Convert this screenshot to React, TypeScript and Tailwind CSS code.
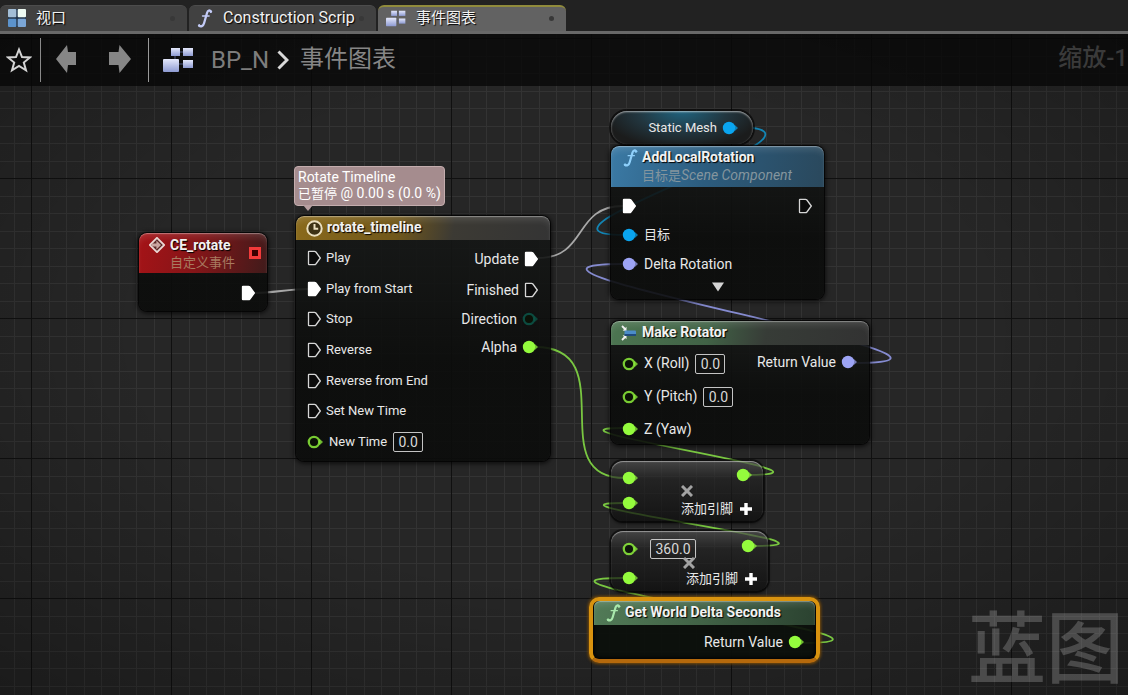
import type { ReactNode } from "react";

const GREEN = "#94fb3d";
const BLUE = "#0aa5f0";
const LILAC = "#9da4f5";
const TEAL = "#0c5a4c";

function ExecPin({ filled = false }: { filled?: boolean }) {
  return (
    <svg className="h-4 w-[14px] shrink-0" viewBox="0 0 14 16" aria-hidden="true">
      <path
        d="M2 1.3 H7.5 Q8.3 1.3 8.9 2 L13.3 8 L8.9 14 Q8.3 14.7 7.5 14.7 H2 Q1.5 14.7 1.5 14 V2 Q1.5 1.3 2 1.3 Z"
        fill={filled ? "#ffffff" : "#0b0b0b"}
        stroke={filled ? "#ffffff" : "#d6d6d6"}
        strokeWidth="1.3"
      />
    </svg>
  );
}

function DataPin({ color, filled = false }: { color: string; filled?: boolean }) {
  return (
    <svg className="h-[14px] w-4 shrink-0" viewBox="0 0 16 14" aria-hidden="true">
      <path d="M12.3 3.6 L16 7 L12.3 10.4 Z" fill={color} opacity="0.7" />
      {filled ? (
        <circle cx="7" cy="7" r="6.2" fill={color} />
      ) : (
        <circle cx="7" cy="7" r="5.2" fill="#0a1206" stroke={color} strokeWidth="2.3" opacity="0.8" />
      )}
    </svg>
  );
}

function FunctionGlyph({ color, className }: { color: string; className: string }) {
  return (
    <svg className={className} viewBox="0 0 16 20" fill="none" stroke={color} strokeLinecap="round" aria-hidden="true">
      <path d="M14.3 2.6 C13 .8 11 1.2 10.2 4 L7 15 C6.2 18.2 3.4 19 1.8 17.6" strokeWidth="2.4" />
      <path d="M5.4 7.4 H12.3" strokeWidth="1.5" />
      <circle cx="14" cy="2.8" r=".9" fill={color} strokeWidth="1" />
      <circle cx="2" cy="17.3" r=".9" fill={color} strokeWidth="1" />
    </svg>
  );
}

function GraphGlyph({ className }: { className: string }) {
  return (
    <svg className={className} viewBox="0 0 31 26" aria-hidden="true">
      <defs>
        <linearGradient id="block" x1="0" y1="0" x2="0" y2="1">
          <stop offset="0" stopColor="#e4e8fb" />
          <stop offset="1" stopColor="#8d9ad2" />
        </linearGradient>
      </defs>
      <path d="M15 5 H22 M15 17 H22 M12 9 V15" stroke="#4c5680" strokeWidth="1" />
      <rect x="8" y="1" width="9" height="8" fill="url(#block)" />
      <rect x="20" y="1" width="10" height="8" fill="url(#block)" />
      <rect x="0" y="12" width="16" height="13" rx="1" fill="url(#block)" />
      <rect x="20" y="13" width="10" height="8" fill="url(#block)" />
    </svg>
  );
}

function ViewportGlyph() {
  return (
    <svg className="h-[18px] w-[18px] shrink-0" viewBox="0 0 18 18" aria-hidden="true">
      <rect x="0" y="0" width="18" height="18" rx="1" fill="#23364c" />
      <rect x="0" y="0" width="8.3" height="8.3" rx="1" fill="#a3bed6" />
      <rect x="9.7" y="0" width="8.3" height="8.3" rx="1" fill="#eefaf2" />
      <rect x="0" y="9.7" width="8.3" height="8.3" rx="1" fill="#5c93cc" />
      <rect x="9.7" y="9.7" width="8.3" height="8.3" rx="1" fill="#7ba6d6" />
    </svg>
  );
}

function Tab({ icon, label, active = false, cjk = false }: { icon: ReactNode; label: string; active?: boolean; cjk?: boolean }) {
  return (
    <div
      className={
        active
          ? "flex h-[26px] w-[188px] min-w-0 items-center rounded-t-md border-t-2 border-[#908b3c] bg-[#626262] pr-3 pb-[2px] pl-2"
          : "flex h-[26px] w-[187px] min-w-0 items-center rounded-t-md border-t border-[#4c4c4c] bg-[#414141] pr-3 pb-px pl-2"
      }
    >
      <button
        type="button"
        role="tab"
        aria-selected={active}
        className="flex min-w-0 flex-1 items-center gap-[10px] text-left whitespace-nowrap text-[#f2f2f2] [text-shadow:1px_1px_1px_#000]"
      >
        {icon}
        <span className={cjk ? "text-[15px]" : "text-[16px]"}>{label}</span>
      </button>
      <button type="button" aria-label={`关闭 ${label}`} className="h-[5px] w-[5px] shrink-0 rounded-full bg-[#383838]" />
    </div>
  );
}

function ValueBox({ label, value, wide = false }: { label: string; value: string; wide?: boolean }) {
  return (
    <input
      aria-label={label}
      defaultValue={value}
      className={
        wide
          ? "h-5 w-[46px] rounded-[2px] border border-[#c4c4c4] bg-transparent text-center text-[14px] leading-4 text-[#d8d8d8]"
          : "h-5 w-[30px] rounded-[2px] border border-[#c4c4c4] bg-transparent text-center text-[14px] leading-4 text-[#d8d8d8]"
      }
    />
  );
}

const nodeFrame =
  "absolute overflow-hidden rounded-lg bg-[linear-gradient(180deg,rgba(22,24,23,0.9)_0%,rgba(11,12,11,0.9)_60%)] shadow-[0_0_0_1px_rgba(0,0,0,0.7),0_1px_4px_2px_rgba(0,0,0,0.6)]";
const gloss = "shadow-[inset_0_1px_1px_rgba(255,255,255,0.35),inset_0_6px_6px_-2px_rgba(255,255,255,0.12)]";
const titleText = "text-[14px] leading-4 font-bold text-[#f2f2f2] [text-shadow:1px_1px_1px_#000]";

function Wires() {
  return (
    <svg className="absolute inset-0 h-full w-full" fill="none" aria-hidden="true">
      <g transform="translate(0 -34)" strokeWidth="1.8">
        <path d="M254 293 C272 293 290 289 308 289" stroke="#a8a8a8" />
        <path d="M538 258 C588 258 573 206 623 206" stroke="#a8a8a8" />
        <path d="M735 127 C871 127 499 235 623 235" stroke="#1385b4" />
        <path d="M855 363 C1040 363 436 264 623 264" stroke="#858bd0" />
        <path d="M535 347 C625 347 540 478 625 478" stroke="#79c741" />
        <path d="M746 475 C871 475 519 428 623 428" stroke="#79c741" />
        <path d="M752 546 C877 546 519 503 623 503" stroke="#79c741" />
        <path d="M800 643 C960 643 475 578 623 578" stroke="#79c741" />
      </g>
    </svg>
  );
}

function Grid() {
  return (
    <svg className="absolute inset-0 h-full w-full" aria-hidden="true">
      <defs>
        <pattern id="grid" x="31" y="144" width="140" height="140" patternUnits="userSpaceOnUse">
          <path
            d="M18 0V140M35 0V140M53 0V140M70 0V140M88 0V140M105 0V140M123 0V140M0 18H140M0 35H140M0 53H140M0 70H140M0 88H140M0 105H140M0 123H140"
            transform="translate(.5 .5)"
            stroke="#333333"
          />
          <path d="M.5 0V140M0 .5H140" stroke="#101010" />
        </pattern>
        <radialGradient id="shade" cx=".5" cy=".45" r=".75">
          <stop offset=".5" stopColor="#000" stopOpacity="0" />
          <stop offset="1" stopColor="#000" stopOpacity=".3" />
        </radialGradient>
      </defs>
      <rect width="100%" height="100%" fill="#262626" />
      <rect width="100%" height="100%" fill="url(#grid)" />
      <rect width="100%" height="100%" fill="url(#shade)" />
    </svg>
  );
}

function EventNode() {
  return (
    <section className={`${nodeFrame} top-[199px] left-[139px] w-32`}>
      <header className={`flex h-10 items-start rounded-t-lg bg-[linear-gradient(100deg,#a51317_0%,#851518_45%,#401b1b_100%)] pt-1 pr-[6px] pl-[10px] ${gloss}`}>
        <svg className="h-4 w-4 shrink-0" viewBox="0 0 16 16" aria-hidden="true">
          <path d="M8 .8 L15.2 8 L8 15.2 L.8 8 Z" fill="#5a2a28" stroke="#ead6d2" strokeWidth="1.8" />
          <path d="M3 6.6 H7.4 V3.6 L12 8 L7.4 12.4 V9.4 H3 Z" fill="#c9a5a0" />
        </svg>
        <div className="ml-[5px] flex-1">
          <h2 className={titleText}>CE_rotate</h2>
          <p className="text-[13px] leading-5 text-[#a87a60]">自定义事件</p>
        </div>
        <span className="mt-[10px] h-3 w-3 border-[3px] border-[#f23a3a] bg-[#3a0000]" />
      </header>
      <div className="flex h-[38px] justify-end pt-3 pr-3">
        <ExecPin filled />
      </div>
    </section>
  );
}

function TimelineNode() {
  const inputs = ["Play", "Play from Start", "Stop", "Reverse", "Reverse from End", "Set New Time"];
  return (
    <section className={`${nodeFrame} top-[182px] left-[296px] w-[254px]`}>
      <header className={`flex h-6 items-center gap-1 rounded-t-lg bg-[linear-gradient(100deg,#8a6a1c_0%,#70571b_40%,#3c3a34_62%,#343434_100%)] pl-[10px] ${gloss}`}>
        <svg className="h-[17px] w-[17px]" viewBox="0 0 17 17" fill="none" stroke="#eadfc0" strokeWidth="2" aria-hidden="true">
          <circle cx="8.5" cy="8.5" r="7.2" fill="#3d3215" />
          <path d="M8.5 4 V8.8 H12.2" />
        </svg>
        <h2 className={`${titleText} pb-[2px]`}>rotate_timeline</h2>
      </header>
      <div className="flex justify-between pt-[3px] pr-3 pb-1 pl-[11px]">
        <ul className="grid h-[214px] grid-rows-7 text-[13px]">
          {inputs.map((name) => (
            <li key={name} className="flex items-center gap-[5px]">
              <ExecPin filled={name === "Play from Start"} />
              {name}
            </li>
          ))}
          <li className="flex items-center gap-[6px]">
            <DataPin color={GREEN} />
            <span>New Time</span>
            <ValueBox label="New Time" value="0.0" />
          </li>
        </ul>
        <ul className="flex flex-col items-end">
          <li className="flex h-[31px] items-center gap-[5px]">
            Update <ExecPin filled />
          </li>
          <li className="flex h-[31px] items-center gap-[5px]">
            Finished <ExecPin />
          </li>
          <li className="flex h-7 items-center gap-[5px]">
            Direction <DataPin color={TEAL} />
          </li>
          <li className="flex h-7 items-center gap-[5px]">
            Alpha <DataPin color={GREEN} filled />
          </li>
        </ul>
      </div>
    </section>
  );
}

function CommentBubble() {
  return (
    <aside className="absolute top-[132px] left-[294px] rounded-[4px] border border-[#c4adae] bg-[#a58c8e] px-[3px] pt-[2px] pb-[3px] text-[14px] leading-4 whitespace-nowrap text-white">
      <p>Rotate Timeline</p>
      <p>
        <span className="text-[13px]">已暂停</span> @ 0.00 s (0.0 %)
      </p>
      <svg className="absolute top-full left-2 h-[6px] w-[10px]" viewBox="0 0 10 6" aria-hidden="true">
        <path d="M0 0 H10 L5 6 Z" fill="#b89fa1" />
      </svg>
    </aside>
  );
}

function StaticMeshNode() {
  return (
    <section className="absolute top-[77px] left-[611px] flex h-[33px] w-[142px] items-center justify-end gap-[5px] rounded-2xl bg-[radial-gradient(ellipse_at_50%_0%,#1f637f_0%,#22363f_45%,#1b1c1c_80%)] pr-[15px] text-[13px] shadow-[inset_0_1px_2px_rgba(255,255,255,0.6),0_0_0_2px_rgba(0,0,0,0.6)]">
      Static Mesh <DataPin color={BLUE} filled />
    </section>
  );
}

function AddLocalRotationNode() {
  return (
    <section className={`${nodeFrame} top-[112px] left-[611px] w-[213px]`}>
      <header className={`flex h-[41px] items-start rounded-t-lg bg-[linear-gradient(100deg,#3b7aa5_0%,#2c5c7e_45%,#2a485c_100%)] pt-[3px] pl-3 ${gloss}`}>
        <FunctionGlyph color="#8fd0fb" className="h-[18px] w-[15px]" />
        <div className="ml-1">
          <h2 className={titleText}>AddLocalRotation</h2>
          <p className="text-[14px] leading-5 whitespace-nowrap text-[#84959e]">
            <span className="text-[13px]">目标是</span>
            <em>Scene Component</em>
          </p>
        </div>
      </header>
      <div className="flex justify-between pt-1 pr-3 pl-[11px]">
        <ul>
          <li className="flex h-[29px] items-center">
            <ExecPin filled />
          </li>
          <li className="flex h-[29px] items-center gap-[6px]">
            <DataPin color={BLUE} filled /> <span className="text-[13px]">目标</span>
          </li>
          <li className="flex h-[29px] items-center gap-[6px]">
            <DataPin color={LILAC} filled /> Delta Rotation
          </li>
        </ul>
        <div className="flex h-[29px] items-center">
          <ExecPin />
        </div>
      </div>
      <button type="button" aria-label="展开" className="mx-auto flex h-[21px] items-start pt-1">
        <svg className="h-[10px] w-3" viewBox="0 0 12 10" aria-hidden="true">
          <path d="M0 .5 H12 L6 9.5 Z" fill="#d4d4d4" />
        </svg>
      </button>
    </section>
  );
}

function MakeRotatorNode() {
  return (
    <section className={`${nodeFrame} top-[287px] left-[611px] w-[258px]`}>
      <header className={`flex h-6 items-center gap-[6px] rounded-t-lg bg-[linear-gradient(100deg,#4c7551_0%,#416246_38%,#373c37_60%,#323232_100%)] pl-[10px] ${gloss}`}>
        <svg className="h-4 w-[15px]" viewBox="0 0 15 16" aria-hidden="true">
          <path d="M1 1 L4 4 M1 15 L4 12" stroke="#f0f0f0" strokeWidth="1.8" />
          <path d="M5.5 1.8 V6 L1.6 5.6 Z M5.5 14.2 V10 L1.6 10.4 Z" fill="#f0f0f0" />
          <rect x="3.5" y="5.5" width="11.5" height="5.5" rx="1" fill="#4b8cc8" />
          <rect x="3.5" y="9" width="11.5" height="2" fill="#1f4a7c" />
        </svg>
        <h2 className={`${titleText} pb-[2px]`}>Make Rotator</h2>
      </header>
      <div className="flex justify-between pt-[2px] pr-3 pl-[11px]">
        <ul>
          <li className="flex h-[33px] items-center gap-[6px]">
            <DataPin color={GREEN} /> <span className="pb-[2px]">X (Roll)</span> <ValueBox label="X (Roll)" value="0.0" />
          </li>
          <li className="flex h-[33px] items-center gap-[6px]">
            <DataPin color={GREEN} /> <span className="pb-[2px]">Y (Pitch)</span> <ValueBox label="Y (Pitch)" value="0.0" />
          </li>
          <li className="flex h-[31px] items-center gap-[6px]">
            <DataPin color={GREEN} filled /> Z (Yaw)
          </li>
        </ul>
        <div className="flex h-[30px] items-center gap-[5px]">
          Return Value <DataPin color={LILAC} filled />
        </div>
      </div>
    </section>
  );
}

const mathFrame =
  "absolute left-[611px] flex h-[60px] justify-between rounded-xl bg-[linear-gradient(180deg,rgba(80,80,80,0.7)_0%,rgba(34,34,34,0.65)_30%,rgba(14,14,14,0.75)_100%)] pr-[6px] pl-[11px] shadow-[inset_0_1px_1px_rgba(255,255,255,0.45),0_0_0_2px_rgba(0,0,0,0.5),0_2px_3px_1px_rgba(0,0,0,0.5)]";

function MultiplyGlyph() {
  return (
    <svg className="h-3 w-3" viewBox="0 0 12 12" stroke="#a3a3a3" strokeWidth="3" aria-hidden="true">
      <path d="M1 1 L11 11 M11 1 L1 11" />
    </svg>
  );
}

function AddPinButton() {
  return (
    <button type="button" className="flex h-4 items-center gap-[7px] text-[13px] leading-4 whitespace-nowrap text-[#e8e8e8]">
      添加引脚
      <svg className="h-3 w-3" viewBox="0 0 12 12" stroke="#fff" strokeWidth="3.4" aria-hidden="true">
        <path d="M6 0 V12 M0 6 H12" />
      </svg>
    </button>
  );
}

function MultiplyNodes() {
  return (
    <>
      <section className={`${mathFrame} top-[427px] w-[152px]`}>
        <div className="flex flex-col gap-[11px] pt-[10px]">
          <DataPin color={GREEN} filled />
          <DataPin color={GREEN} filled />
        </div>
        <div className="flex flex-col items-end justify-between pt-[7px] pr-[5px] pb-1">
          <DataPin color={GREEN} filled />
          <AddPinButton />
        </div>
        <div className="absolute top-6 left-[70px]">
          <MultiplyGlyph />
        </div>
      </section>
      <section className={`${mathFrame} top-[497px] w-[157px]`}>
        <div className="flex flex-col gap-[15px] pt-[11px]">
          <div className="flex h-[14px] items-center gap-3">
            <DataPin color={GREEN} />
            <ValueBox label="乘数" value="360.0" wide />
          </div>
          <DataPin color={GREEN} filled />
        </div>
        <div className="absolute right-[11px] bottom-1 flex h-12 flex-col items-end justify-between">
          <DataPin color={GREEN} filled />
          <AddPinButton />
        </div>
        <div className="absolute top-[26px] left-[72px]">
          <MultiplyGlyph />
        </div>
      </section>
    </>
  );
}

function DeltaSecondsNode() {
  return (
    <section className="absolute top-[563px] left-[589px] w-[231px] rounded-[10px] border-4 border-[#d9930f] border-b-[#b5690c] bg-[#0b0f0b]/93 shadow-[0_0_3px_1px_#7a4c08,inset_0_0_4px_1px_#000]">
      <header className={`mx-px flex h-6 items-center gap-1 rounded-t-md bg-[linear-gradient(100deg,#527b57_0%,#416246_50%,#2b4230_100%)] pl-3 ${gloss}`}>
        <FunctionGlyph color="#a9e8ac" className="h-[18px] w-[15px]" />
        <h2 className={`${titleText} pb-[2px]`}>Get World Delta Seconds</h2>
      </header>
      <div className="flex h-[34px] items-center justify-end gap-[5px] pr-3">
        Return Value <DataPin color={GREEN} filled />
      </div>
    </section>
  );
}

export default function App() {
  return (
    <div className="flex h-screen flex-col overflow-hidden bg-[#222222] font-[Roboto,'Noto_Sans_CJK_SC',sans-serif] text-[14px] leading-4 text-[#e8e8e8]">
      <nav role="tablist" className="flex gap-[2px] border-b-[3px] border-[#686868] pt-[5px] leading-5">
        <Tab icon={<ViewportGlyph />} label="视口" cjk />
        <Tab icon={<FunctionGlyph color="#c3cbf7" className="h-[19px] w-4 shrink-0" />} label="Construction Scrip" />
        <Tab icon={<GraphGlyph className="h-[17px] w-5 shrink-0" />} label="事件图表" active cjk />
      </nav>

      <main className="relative flex-1 overflow-hidden">
        <Grid />
        <div className="relative flex h-[52px] items-center overflow-hidden bg-[#080808]/80 text-[24px] leading-8 whitespace-nowrap text-[#868686]">
          <button type="button" aria-label="收藏" className="pl-[6px]">
            <svg className="h-[26px] w-[26px]" viewBox="0 0 26 26" fill="none" stroke="#d4d4d4" strokeWidth="2" aria-hidden="true">
              <path d="M13 2.5 L16 10 L24 10.4 L17.8 15.5 L20 23.3 L13 19 L6 23.3 L8.2 15.5 L2 10.4 L10 10 Z" />
            </svg>
          </button>
          <span className="ml-2 h-11 w-px bg-[#8a8a8a]" />
          <button type="button" aria-label="后退" className="ml-[15px] pb-[2px]">
            <svg className="h-7 w-[21px]" viewBox="0 0 21 28" aria-hidden="true">
              <path d="M0 14 L11 0 L12 7 H20 V20 H12 L11 28 Z" fill="#868686" />
            </svg>
          </button>
          <button type="button" aria-label="前进" className="ml-8 pb-[2px]">
            <svg className="h-7 w-[22px]" viewBox="0 0 22 28" aria-hidden="true">
              <path d="M22 14 L10.5 0 L9.5 7 H0 V20 H9.5 L10.5 28 Z" fill="#868686" />
            </svg>
          </button>
          <span className="ml-[17px] h-11 w-px bg-[#9a9a9a]" />
          <GraphGlyph className="ml-[14px] h-[26px] w-[31px] shrink-0" />
          <a href="#bp" className="ml-[17px] text-[#7d7d7d]">
            BP_N
          </a>
          <svg className="ml-2 h-5 w-3 shrink-0" viewBox="0 0 12 20" fill="none" stroke="#d8d8d8" strokeWidth="3" aria-hidden="true">
            <path d="M1.5 1.5 L10 10 L1.5 18.5" />
          </svg>
          <span className="ml-[11px] pb-[3px]">事件图表</span>
          <span className="ml-auto pb-[5px] font-medium text-[#3a3a3a]">缩放-1</span>
        </div>

        <Wires />
        <EventNode />
        <TimelineNode />
        <CommentBubble />
        <StaticMeshNode />
        <AddLocalRotationNode />
        <MakeRotatorNode />
        <MultiplyNodes />
        <DeltaSecondsNode />
        <p className="absolute right-1 bottom-1 text-[78px] leading-[80px] font-medium text-white/20">蓝图</p>
      </main>
    </div>
  );
}
